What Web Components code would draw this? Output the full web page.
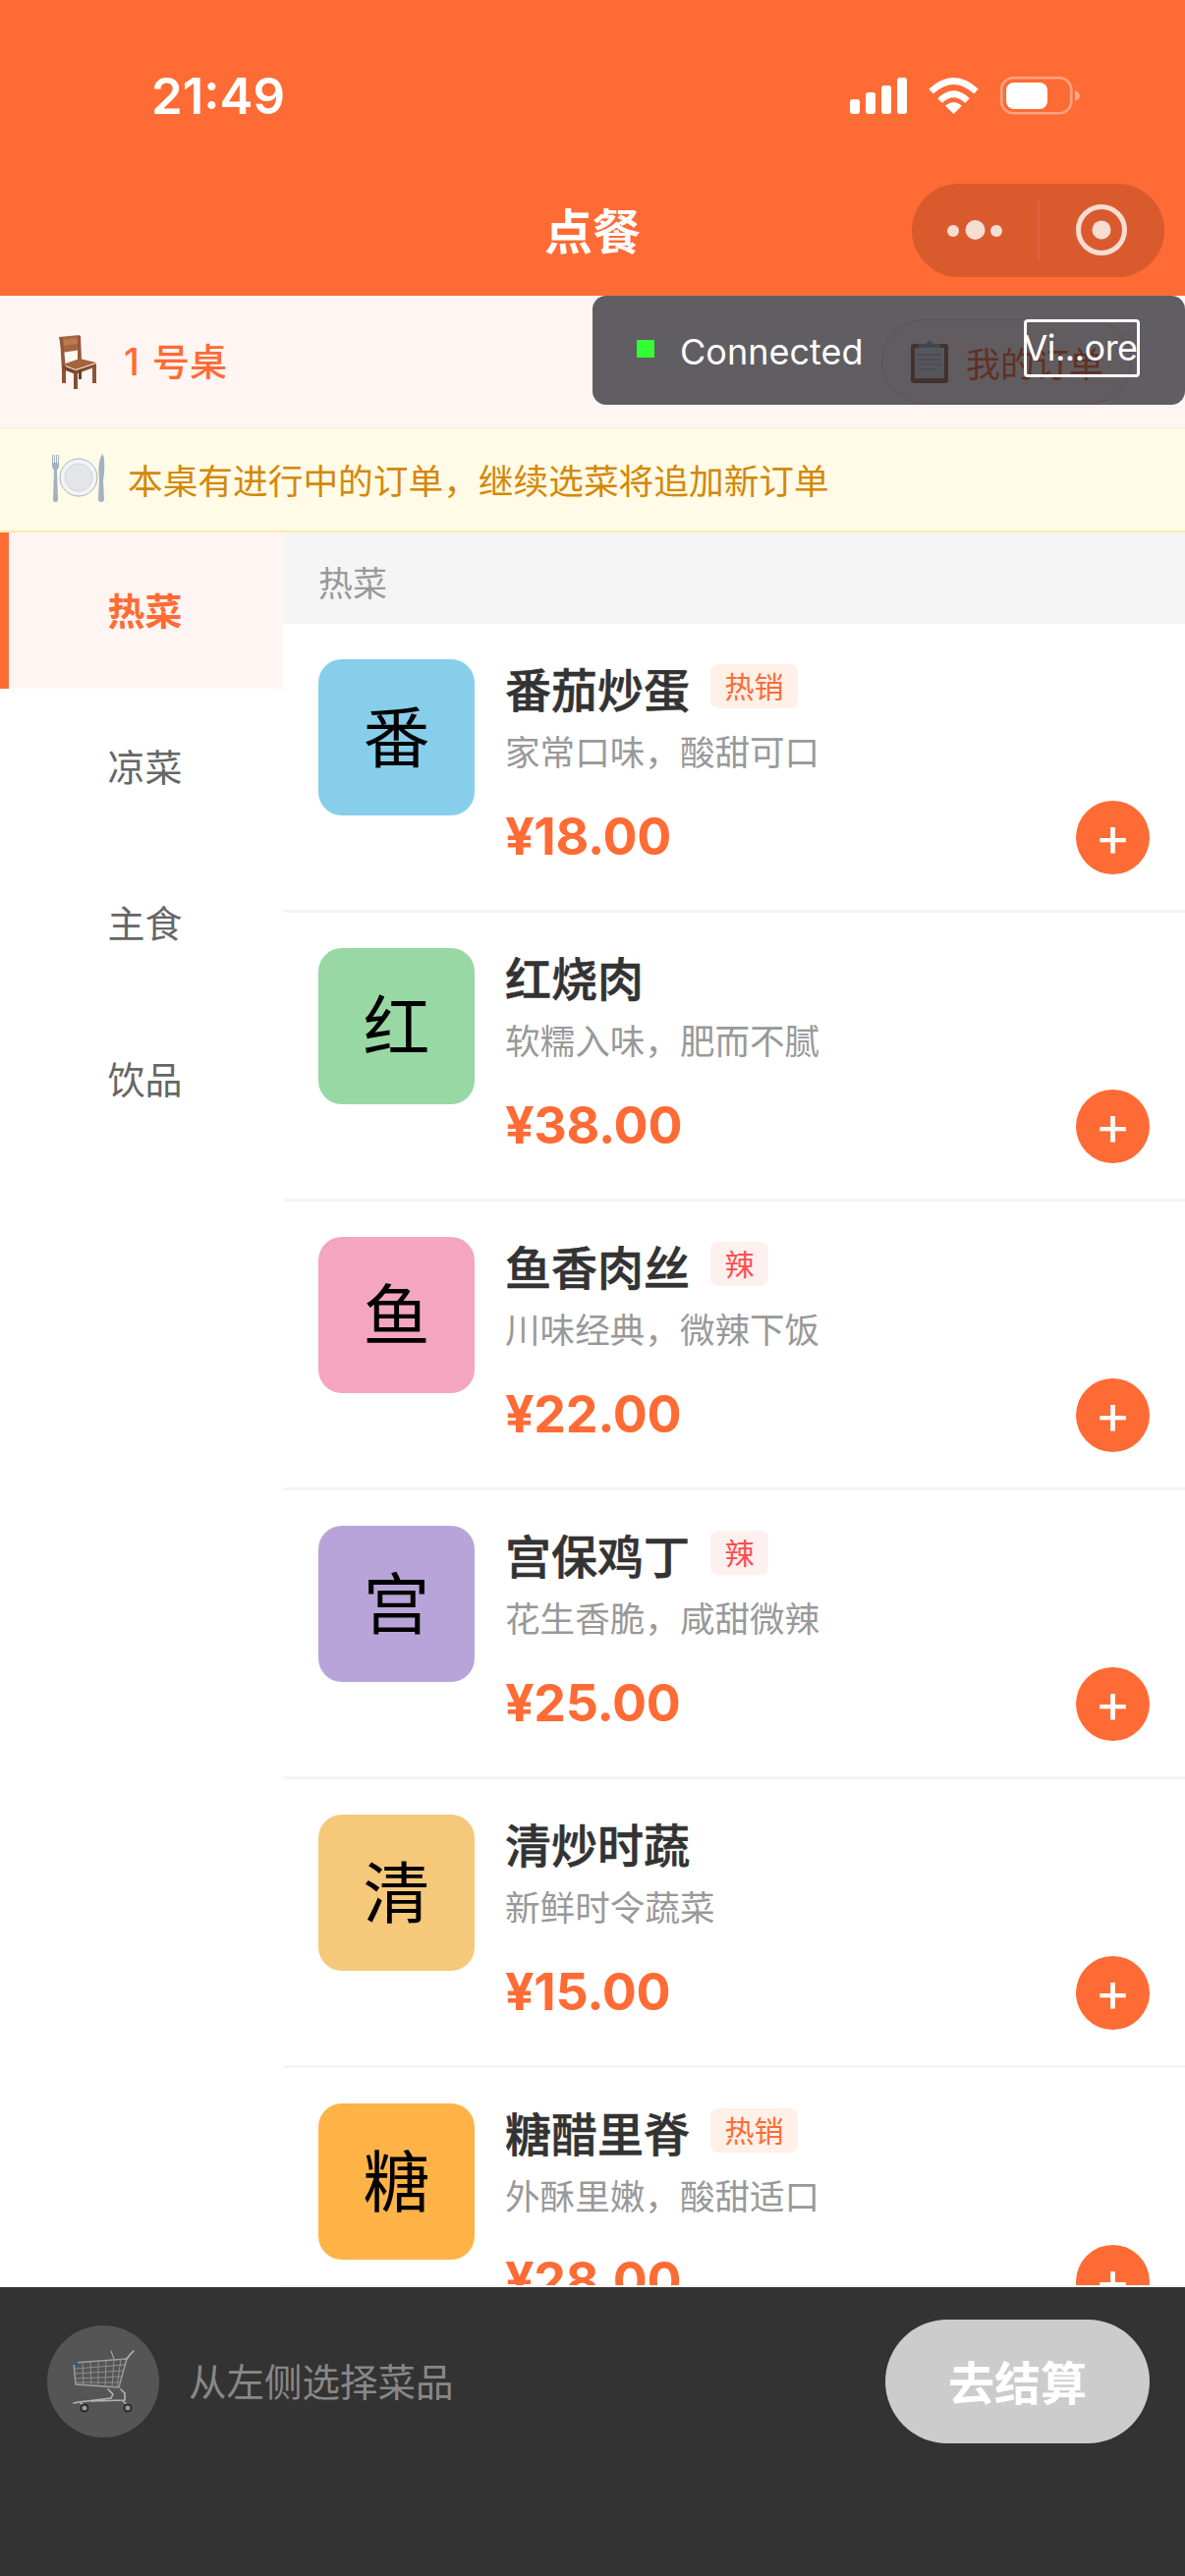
<!DOCTYPE html>
<html lang="zh">
<head>
<meta charset="utf-8">
<title>点餐</title>
<style>
  html, body { margin: 0; padding: 0; background: #fff; }
  body { font-family: "Noto Sans CJK SC", sans-serif; }
</style>
</head>
<body>
<app-shell>
  <status-bar></status-bar>
  <nav-bar title="点餐"></nav-bar>
  <table-bar label="1 号桌"></table-bar>
  <notice-bar text="本桌有进行中的订单，继续选菜将追加新订单"></notice-bar>
  <menu-panel>
    <category-list slot="side">
      <category-item active>热菜</category-item>
      <category-item>凉菜</category-item>
      <category-item>主食</category-item>
      <category-item>饮品</category-item>
    </category-list>
    <section-title>热菜</section-title>
    <dish-row glyph="番" color="#87ceeb" name="番茄炒蛋" desc="家常口味，酸甜可口" price="¥18.00" tag="热销"></dish-row>
    <dish-row glyph="红" color="#98d8a4" name="红烧肉" desc="软糯入味，肥而不腻" price="¥38.00"></dish-row>
    <dish-row glyph="鱼" color="#f4a6c0" name="鱼香肉丝" desc="川味经典，微辣下饭" price="¥22.00" tag="辣"></dish-row>
    <dish-row glyph="宫" color="#b8a4d8" name="宫保鸡丁" desc="花生香脆，咸甜微辣" price="¥25.00" tag="辣"></dish-row>
    <dish-row glyph="清" color="#f5c87a" name="清炒时蔬" desc="新鲜时令蔬菜" price="¥15.00"></dish-row>
    <dish-row glyph="糖" color="#ffb347" name="糖醋里脊" desc="外酥里嫩，酸甜适口" price="¥28.00" tag="热销"></dish-row>
  </menu-panel>
  <cart-bar></cart-bar>
  <connect-toast></connect-toast>
</app-shell>

<script>
// base class: every element just writes its markup once into an open shadow root
class ShadowEl extends HTMLElement {
  constructor() {
    super();
    this.attachShadow({ mode: 'open' });
  }
  connectedCallback() { this.render(); }
}

class AppShell extends ShadowEl {
  render() {
    this.shadowRoot.innerHTML = `
      <style>
        :host { display: flex; flex-direction: column; position: relative; width: 1206px; height: 2622px; overflow: hidden; background: #fff; }
      </style>
      <slot></slot>`;
  }
}

class StatusBar extends ShadowEl {
  render() {
    this.shadowRoot.innerHTML = `
      <style>
        :host { display: flex; justify-content: space-between; align-items: flex-start; height: 168px; box-sizing: border-box; padding: 67px 106px 0 154px; background: #ff6b35; color: #fff; }
        .time { font: 600 51px/62px Inter, "Noto Sans CJK SC", sans-serif; }
        .icons { display: flex; padding-top: 11px; }
        svg { display: block; }
      </style>
      <span class="time">21:49</span>
      <div class="icons">
        <svg width="235" height="40" viewBox="0 0 235 40">
          <g fill="#fff">
            <rect x="0" y="23" width="10" height="15" rx="3"/>
            <rect x="16" y="16" width="10" height="22" rx="3"/>
            <rect x="32" y="9" width="10" height="29" rx="3"/>
            <rect x="48" y="1" width="10" height="37" rx="3"/>
          </g>
          <g fill="none" stroke="#fff" stroke-width="6.5">
            <path d="M82.500 15 Q105.500 -6 128.500 15"/>
            <path d="M91.500 24.500 Q105.500 11 119.500 24.500"/>
          </g>
          <path d="M105.500 38 L97 29.500 Q105.500 22.500 114 29.500 Z" fill="#fff"/>
          <rect x="154.200" y="1.200" width="71" height="36" rx="12" fill="none" stroke="#fff" stroke-opacity=".38" stroke-width="2.600"/>
          <rect x="159" y="6" width="42" height="27" rx="8" fill="#fff"/>
          <path d="M229 14 Q234 16.500 234 19.500 Q234 22.500 229 25 Z" fill="#fff" fill-opacity=".45"/>
        </svg>
      </div>`;
  }
}

class NavBar extends ShadowEl {
  render() {
    this.shadowRoot.innerHTML = `
      <style>
        :host { display: grid; grid-template-columns: 1fr auto 1fr; align-items: center; height: 133px; box-sizing: border-box; background: #ff6b35; color: #fff; }
        .title { grid-column: 2; font-size: 49px; font-weight: 700; line-height: 70px; position: relative; top: -2px; }
        .capsule { grid-column: 3; justify-self: end; margin-right: 21px; width: 257px; height: 95px; border-radius: 48px; background: #d95b2d; }
        svg { display: block; }
      </style>
      <span class="title">${this.getAttribute('title')}</span>
      <div class="capsule">
        <svg width="257" height="95" viewBox="0 0 257 95">
          <g fill="#f5ddd3">
            <circle cx="42" cy="48" r="6"/>
            <circle cx="64.500" cy="47" r="10"/>
            <circle cx="86" cy="48" r="6"/>
            <circle cx="193" cy="47" r="9.500"/>
          </g>
          <rect x="128.500" y="17" width="1" height="60" fill="#e5734a"/>
          <circle cx="193" cy="47" r="23.500" fill="none" stroke="#f5ddd3" stroke-width="5"/>
        </svg>
      </div>`;
  }
}

class TableBar extends ShadowEl {
  render() {
    this.shadowRoot.innerHTML = `
      <style>
        :host { display: flex; justify-content: space-between; align-items: center; height: 135px; box-sizing: border-box; padding: 0 54px 0 60px; background: #fff5f2; border-bottom: 1px solid #f5ebe6; }
        .seat { display: flex; align-items: center; gap: 28px; color: #ff6b35; font: 500 38px/50px Inter, "Noto Sans CJK SC", sans-serif; word-spacing: 3px; }
        .orders { display: flex; align-items: center; gap: 18px; height: 86px; box-sizing: border-box; padding: 0 28px 0 29px; border-radius: 43px; border: 1px solid #ffc9b5; background: #fff0ea; color: #ff6b35; font-size: 35px; }
        svg { display: block; }
      </style>
      <div class="seat">
        <svg width="38" height="55" viewBox="0 0 38 55">
          <path d="M0 2 L21 0 L22 15 L3 18 Z" fill="#a5653f"/>
          <path d="M2 5 L20 3 L20 9 L3 11 Z" fill="#b97a50"/>
          <path d="M1 3 L4 3 L7 35 L3 36 Z" fill="#94583a"/>
          <path d="M19 1 L22 1 L23 26 L19 25 Z" fill="#94583a"/>
          <path d="M4 30 L21 24 L38 28 L17 35 Z" fill="#a4633b"/>
          <path d="M4 31 L17 36 L17 40 L4 35 Z" fill="#7a4526"/>
          <path d="M17 36 L38 29 L38 32 L17 40 Z" fill="#85502f"/>
          <path d="M3 34 L7 36 L7 49 L3 49 Z" fill="#8d5534"/>
          <path d="M15 38 L19 38 L19 55 L15 55 Z" fill="#85502f"/>
          <path d="M34 31 L38 30 L38 49 L34 49 Z" fill="#8d5534"/>
          <path d="M20 36 L23 35 L23 45 L20 45 Z" fill="#6f4023"/>
        </svg>
        <span>${this.getAttribute('label')}</span>
      </div>
      <div class="orders">
        <svg width="38" height="44" viewBox="0 0 38 44">
          <rect x="0" y="4" width="38" height="40" rx="3" fill="#a37150"/>
          <rect x="4" y="8" width="30" height="31" fill="#dcdcdc"/>
          <g fill="#c6c6c6">
            <rect x="7" y="14" width="24" height="2"/><rect x="7" y="19" width="24" height="2"/>
            <rect x="7" y="24" width="24" height="2"/><rect x="7" y="29" width="18" height="2"/>
          </g>
          <path d="M8 4 L15 4 L19 0 L23 4 L30 4 L30 8 L8 8 Z" fill="#a8aeb6"/>
        </svg>
        <span>我的订单</span>
      </div>`;
  }
}

class NoticeBar extends ShadowEl {
  render() {
    this.shadowRoot.innerHTML = `
      <style>
        :host { display: flex; align-items: center; gap: 23px; height: 106px; box-sizing: border-box; padding: 0 0 2px 52px; background: #fffbe6; border-bottom: 2px solid #ffe9a8; color: #d48806; font-size: 35.700px; }
        svg { display: block; flex: none; }
      </style>
      <svg width="55" height="50" viewBox="0 0 55 50">
        <g fill="#a3b2c2">
          <path d="M1 1 L2 1 L2 9 L3 9 L3 1 L4 1 L4 9 L5 9 L5 1 L6 1 L6 9 L7 9 L7 1 L8 1 L8 12 Q8 15 6 16 L7 46 Q7 49 4.500 49 Q2 49 2 46 L3 16 Q1 15 1 12 Z"/>
          <path d="M52 0 Q55 2 54 20 L53 27 L54 46 Q54 49 51 49 Q48 49 48 46 L49 24 Q47 10 52 0 Z"/>
        </g>
        <circle cx="28" cy="24" r="19" fill="#f1f3f5" stroke="#aab1b9" stroke-width="1"/>
        <circle cx="28" cy="24" r="14" fill="#e3e6e9" stroke="#cfd4d9" stroke-width="1"/>
      </svg>
      <span>${this.getAttribute('text')}</span>`;
  }
}

class MenuPanel extends ShadowEl {
  render() {
    this.shadowRoot.innerHTML = `
      <style>
        :host { display: flex; flex: 1; min-height: 0; }
        .side { flex: none; width: 288px; background: #fff; }
        .main { flex: 1; min-width: 0; box-sizing: border-box; padding-bottom: 2px; background: #f5f5f5; display: flex; }
        .scroll { flex: 1; min-width: 0; overflow: hidden; background: #fff; }
      </style>
      <div class="side"><slot name="side"></slot></div>
      <div class="main"><div class="scroll"><slot></slot></div></div>`;
  }
}

class CategoryList extends ShadowEl {
  render() {
    this.shadowRoot.innerHTML = `
      <style>:host { display: block; }</style>
      <slot></slot>`;
  }
}

class CategoryItem extends ShadowEl {
  render() {
    this.shadowRoot.innerHTML = `
      <style>
        :host { display: flex; align-items: center; justify-content: center; height: 159px; box-sizing: border-box; padding: 0 2px 5px 0; color: #666; font-size: 38px; border-left: 9px solid transparent; }
        :host([active]) { background: #fff5f2; border-left-color: #ff6b35; color: #ff6b35; font-weight: 700; }
      </style>
      <slot></slot>`;
  }
}

class SectionTitle extends ShadowEl {
  render() {
    this.shadowRoot.innerHTML = `
      <style>
        :host { display: flex; align-items: center; height: 93px; box-sizing: border-box; padding: 5px 0 0 36px; background: #f5f5f5; color: #999; font-size: 35px; }
      </style>
      <slot></slot>`;
  }
}

class DishRow extends ShadowEl {
  render() {
    const tag = this.getAttribute('tag');
    const tagClass = tag === '辣' ? 'tag hot' : 'tag';
    this.shadowRoot.innerHTML = `
      <style>
        :host { display: flex; gap: 31px; box-sizing: border-box; height: 294px; padding: 36px 36px 0; background: #fff; border-bottom: 3px solid #f5f5f5; }
        .thumb { flex: none; display: flex; align-items: center; justify-content: center; width: 159px; height: 159px; box-sizing: border-box; padding-bottom: 8px; border-radius: 24px; color: #000; font-size: 68px; }
        .info { flex: 1; min-width: 0; display: flex; flex-direction: column; height: 218px; }
        .head { display: flex; align-items: center; gap: 21px; height: 62px; margin-top: -3px; }
        .name { color: #333; font-size: 47px; font-weight: 500; -webkit-text-stroke: .6px #333; }
        .tag { height: 45px; line-height: 43px; padding: 0 14.500px; border-radius: 8px; background: #fff0e8; color: #ff6b35; font-size: 30px; position: relative; top: -1px; }
        .tag.hot { background: #fff0f0; color: #ff4d4f; }
        .desc { margin-top: 12px; height: 44px; line-height: 44px; color: #999; font-size: 35.600px; }
        .foot { margin-top: 29px; display: flex; align-items: center; justify-content: space-between; height: 74px; }
        .price { color: #ff6b35; font: 700 52px/74px Inter, "Noto Sans CJK SC", sans-serif; letter-spacing: -.3px; }
        .add { display: flex; align-items: center; justify-content: center; width: 75px; height: 75px; border-radius: 50%; background: #ff6b35; color: #fff; font: 400 56px/75px Inter, sans-serif; }
        .add span { position: relative; top: -1px; }
      </style>
      <div class="thumb" style="background:${this.getAttribute('color')}">${this.getAttribute('glyph')}</div>
      <div class="info">
        <div class="head">
          <span class="name">${this.getAttribute('name')}</span>
          ${tag ? `<span class="${tagClass}">${tag}</span>` : ''}
        </div>
        <div class="desc">${this.getAttribute('desc')}</div>
        <div class="foot">
          <span class="price">${this.getAttribute('price')}</span>
          <div class="add"><span>+</span></div>
        </div>
      </div>`;
  }
}

class CartBar extends ShadowEl {
  render() {
    this.shadowRoot.innerHTML = `
      <style>
        :host { display: flex; align-items: center; flex: none; height: 294px; box-sizing: border-box; padding: 33px 36px 135px 48px; background: #333; }
        .cart { flex: none; width: 114px; height: 114px; border-radius: 50%; background: #555; }
        .hint { flex: 1; margin: 0 0 5px 30px; color: #888; font-size: 38.500px; }
        .pay { flex: none; display: flex; align-items: center; justify-content: center; width: 269px; height: 126px; box-sizing: border-box; padding-bottom: 3px; border-radius: 63px; background: #ccc; color: #fff; font-size: 47px; font-weight: 700; }
        svg { display: block; }
      </style>
      <div class="cart">
        <svg width="114" height="114" viewBox="0 0 114 114">
          <g fill="none" stroke="#8e8e8e" stroke-width="1">
            <path d="M27 38 L81 34 L73 63 L29 60 Z" stroke="#a0a0a0" stroke-width="1.400"/>
            <path d="M28 44 L79 40 M28 49 L78 46 M28.500 54 L76 52 M29 58 L74 58"/>
            <path d="M36 37 L37 61 M44 37 L45 61 M52 36 L52 62 M60 36 L59 62 M68 35 L66 63 M75 34 L71 63"/>
          </g>
          <g fill="none" stroke="#b4b4b4" stroke-width="1.600" stroke-linecap="round" stroke-linejoin="round">
            <path d="M81 34 L84 30 L88 26"/>
            <path d="M65 26 L68 34" stroke-width="1"/>
            <path d="M62 65 L67 70 L65 74 L32 78 L27 79"/>
            <path d="M75 65 L79 69 L79 76 L45 77"/>
            <path d="M34 79 L38 81"/>
            <path d="M77 77 L82 81"/>
          </g>
          <rect x="26" y="36" width="5" height="4" fill="#2c5f86"/>
          <circle cx="38" cy="84" r="3.500" fill="#9a9a9a" stroke="#2e2626" stroke-width="2"/>
          <circle cx="82" cy="84" r="3.500" fill="#9a9a9a" stroke="#2e2626" stroke-width="2"/>
        </svg>
      </div>
      <span class="hint">从左侧选择菜品</span>
      <div class="pay">去结算</div>`;
  }
}

class ConnectToast extends ShadowEl {
  render() {
    this.shadowRoot.innerHTML = `
      <style>
        :host { position: absolute; top: 301px; right: 0; width: 603px; height: 111px; box-sizing: border-box; display: flex; align-items: flex-start; padding: 24px 46px 0 45px; border-radius: 14px; background: rgba(18, 20, 28, .67); color: #fff; font: 400 36px/52px Inter, sans-serif; }
        .dot { flex: none; width: 18px; height: 18px; margin: 21px 26px 0 0; background: #33ff33; }
        .label { flex: 1; position: relative; top: 7px; }
        .more { flex: none; box-sizing: border-box; width: 118px; height: 59px; padding-right: 3px; line-height: 53px; border: 3px solid #fff; border-radius: 4px; white-space: nowrap; letter-spacing: -.5px; display: flex; justify-content: center; }
      </style>
      <span class="dot"></span>
      <span class="label">Connected</span>
      <span class="more">Vi...ore</span>`;
  }
}

customElements.define('app-shell', AppShell);
customElements.define('status-bar', StatusBar);
customElements.define('nav-bar', NavBar);
customElements.define('table-bar', TableBar);
customElements.define('notice-bar', NoticeBar);
customElements.define('menu-panel', MenuPanel);
customElements.define('category-list', CategoryList);
customElements.define('category-item', CategoryItem);
customElements.define('section-title', SectionTitle);
customElements.define('dish-row', DishRow);
customElements.define('cart-bar', CartBar);
customElements.define('connect-toast', ConnectToast);
</script>
</body>
</html>
